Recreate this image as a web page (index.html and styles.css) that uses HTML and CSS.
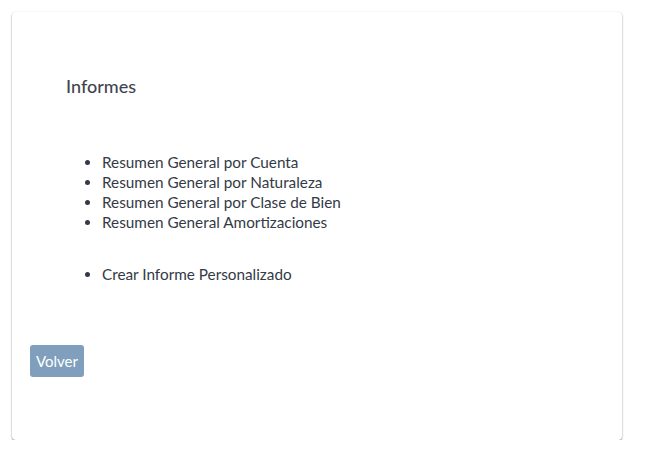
FILE: index.html
```html
<!DOCTYPE html>
<html lang="es">
<head>
  <meta charset="UTF-8">
  <title>Informes</title>
  <link rel="stylesheet" href="styles.css">
</head>
<body>

<div class="card">
  <div class="report-box">
    <h2 class="report-title">Informes</h2>
    <ul class="report-list">
      <li>Resumen General por Cuenta</li>
      <li>Resumen General por Naturaleza</li>
      <li>Resumen General por Clase de Bien</li>
      <li>Resumen General Amortizaciones</li>
    </ul>
    <ul class="report-list">
      <li>Crear Informe Personalizado</li>
    </ul>
  </div>
  <button class="back-button">Volver</button>
</div>

</body>
</html>
```

FILE: styles.css
```css
body {
  margin: 0;
  background: #fff;
  font-family: "Lato", "Open Sans", sans-serif;
  color: #333a46;
}

.card {
  margin: 12px 26px 0 12px;
  height: 428px;
  box-sizing: border-box;
  padding: 18px 18px;
  background: #fff;
  border-radius: 4px;
  box-shadow: 0 1px 2px rgba(0, 0, 0, 0.45), 0 0 1px rgba(0, 0, 0, 0.08);
}

.report-box {
  padding: 45px 36px 0;
}

.report-title {
  margin: 0;
  font-size: 18px;
  line-height: 22px;
  font-weight: 500;
  color: #3f4550;
}

.report-list {
  margin: 55px 0 0;
  padding-left: 36px;
  font-size: 15.3px;
  line-height: 20px;
}

.report-list + .report-list {
  margin-top: 32px;
}

.back-button {
  margin-top: 61px;
  padding: 6px 6px;
  background: #7f9fbd;
  color: #fff;
  border: none;
  border-radius: 3px;
  font-family: inherit;
  font-size: 15px;
  line-height: 20px;
  cursor: pointer;
}
```
